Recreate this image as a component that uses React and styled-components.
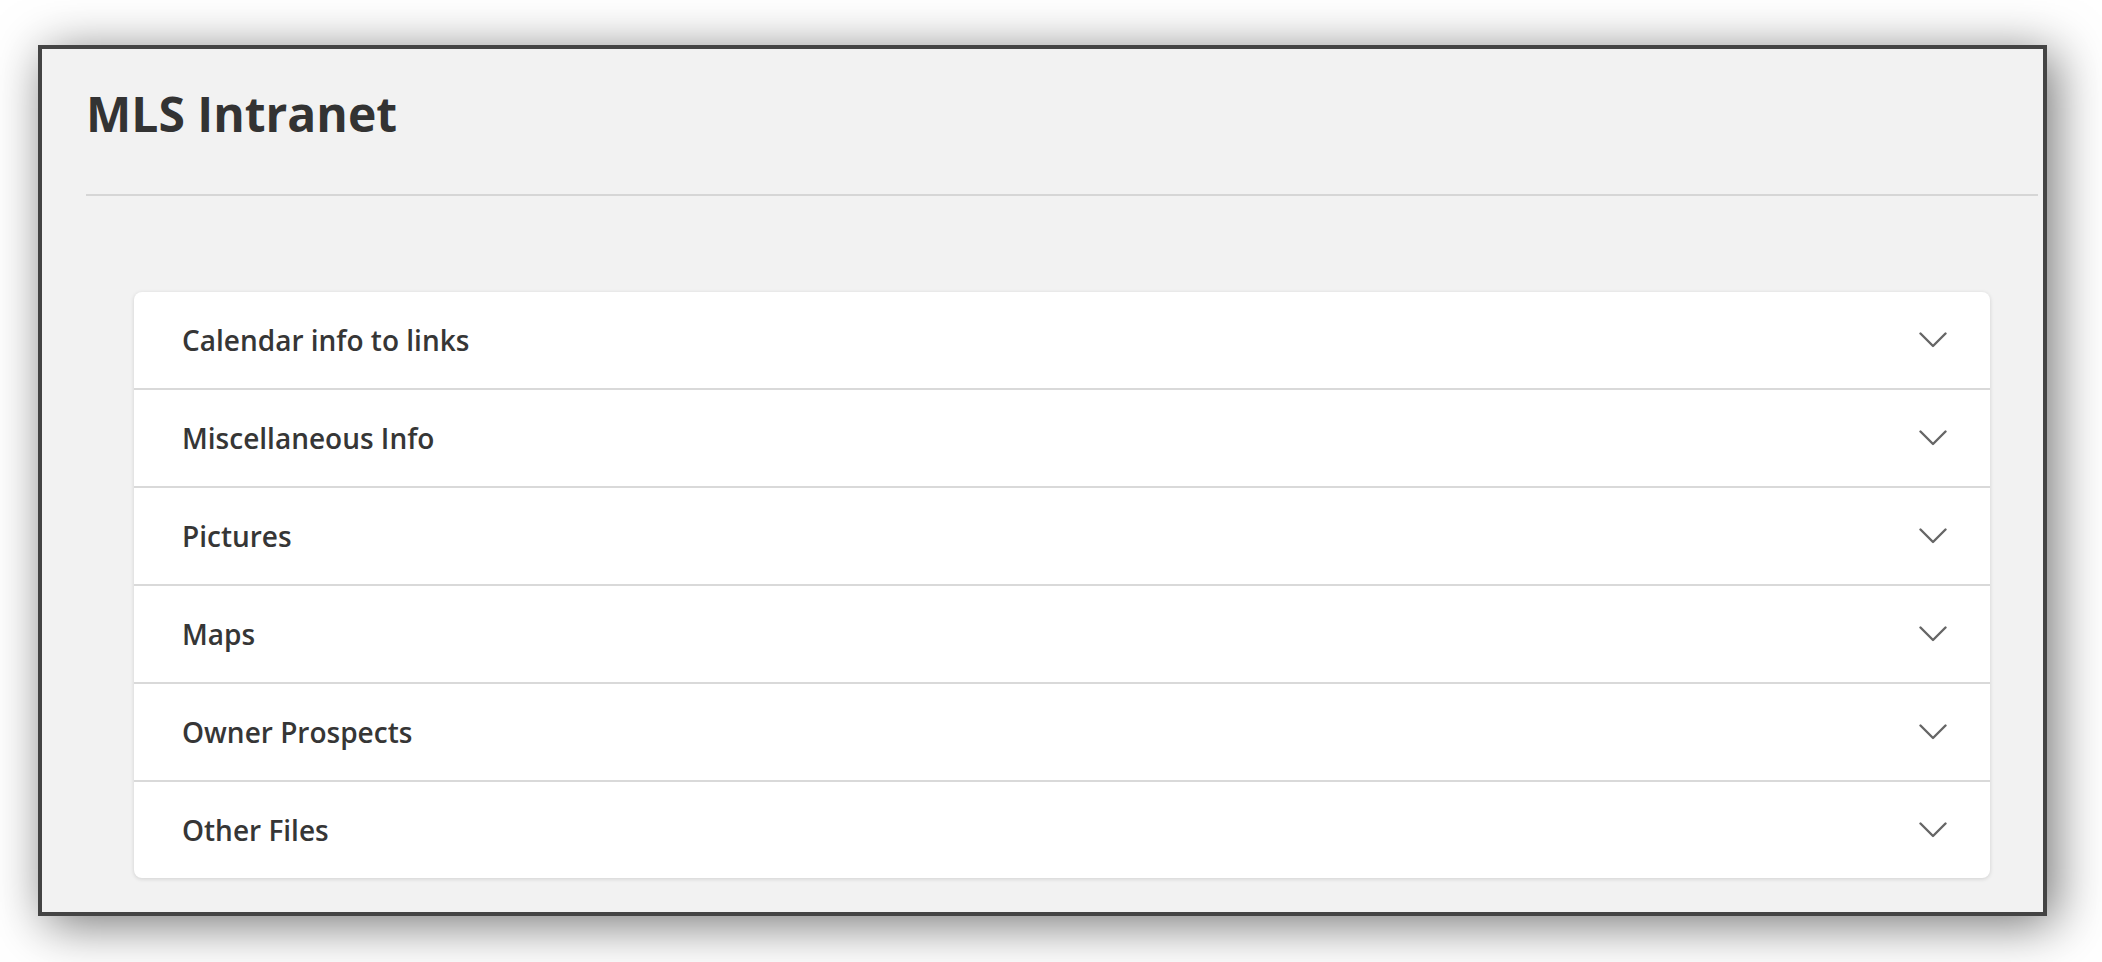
import React from "react";
import styled, { createGlobalStyle } from "styled-components";

const Global = createGlobalStyle`
  html, body { margin: 0; padding: 0; background: #ffffff; }
  body { font-family: "Open Sans", "Noto Sans", sans-serif; color: #333333; }
`;

const Page = styled.div`
  padding: 45px 55px 47px 38px;
`;

const Frame = styled.div`
  box-sizing: border-box;
  height: 871px;
  background: #f2f2f2;
  border: 4px solid #444444;
  box-shadow: 8px 8px 48px rgba(0, 0, 0, 0.55);
  display: flex;
  flex-direction: column;
`;

const Header = styled.header`
  margin: 0 5px 0 44px;
  padding-top: 32px;
  border-bottom: 2px solid #d6d6d6;
`;

const Title = styled.h1`
  margin: 0 0 48px 0;
  font-size: 48px;
  font-weight: 700;
  line-height: 65px;
  color: #333333;
  letter-spacing: 0;
`;

const Card = styled.section`
  margin: 96px 53px 0 92px;
  background: #ffffff;
  border-radius: 8px;
  box-shadow: 0 1px 4px rgba(0, 0, 0, 0.14);
  overflow: hidden;
`;

const Row = styled.div`
  height: 96px;
  display: flex;
  align-items: center;
  justify-content: space-between;
  padding: 0 43px 0 48px;
  border-bottom: ${(p) => (p.$last ? "none" : "2px solid #d9d9d9")};
  cursor: pointer;
`;

const Label = styled.span`
  font-size: 28px;
  font-weight: 600;
  color: #363636;
`;

const Chevron = styled.svg`
  width: 28px;
  height: 17px;
  display: block;
`;

const items = [
  "Calendar info to links",
  "Miscellaneous Info",
  "Pictures",
  "Maps",
  "Owner Prospects",
  "Other Files",
];

export default function App() {
  return (
    <>
      <Global />
      <Page>
        <Frame>
          <Header>
            <Title>MLS Intranet</Title>
          </Header>
          <Card>
            {items.map((t, i) => (
              <Row key={t} $last={i === items.length - 1}>
                <Label>{t}</Label>
                <Chevron viewBox="0 0 28 17" fill="none">
                  <polyline
                    points="1.5,1.5 14,14 26.5,1.5"
                    stroke="#666666"
                    strokeWidth="2.4"
                    strokeLinecap="round"
                    strokeLinejoin="round"
                  />
                </Chevron>
              </Row>
            ))}
          </Card>
        </Frame>
      </Page>
    </>
  );
}
